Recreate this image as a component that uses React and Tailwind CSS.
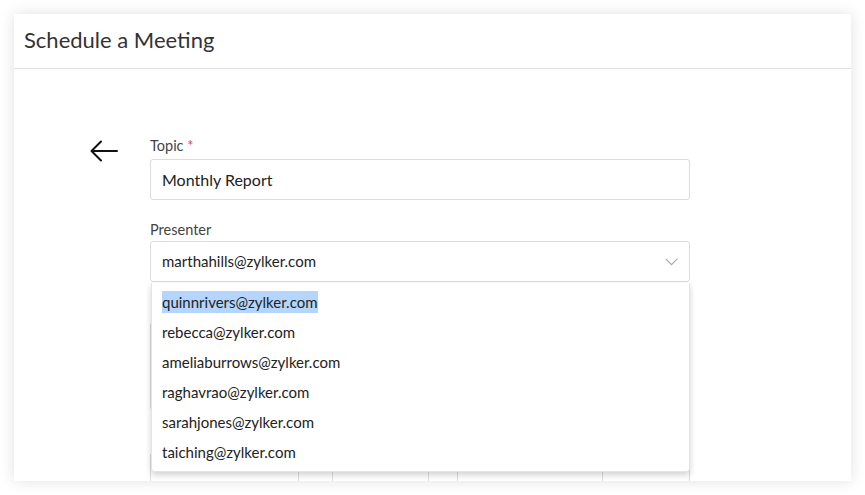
import React from 'react';

const presenters = [
  'quinnrivers@zylker.com',
  'rebecca@zylker.com',
  'ameliaburrows@zylker.com',
  'raghavrao@zylker.com',
  'sarahjones@zylker.com',
  'taiching@zylker.com',
];

const BackArrow = () => (
  <svg width="28" height="22" viewBox="0 0 28 22" fill="none" stroke="#111" strokeWidth="2" strokeLinecap="round" strokeLinejoin="round">
    <path d="M27 11H2" />
    <path d="M11 1.5L1.5 11L11 20.5" />
  </svg>
);

const Chevron = () => (
  <svg width="13" height="8" viewBox="0 0 13 8" fill="none" stroke="#a8a8a8" strokeWidth="1.2">
    <path d="M0.8 0.8L6.5 6.6L12.2 0.8" />
  </svg>
);

export default function App() {
  return (
    <div className="h-[495px] w-[865px] bg-white px-[14px] pt-[14px] font-['Lato','Open_Sans',sans-serif]">
      <div className="flex h-[467px] w-[837px] flex-col overflow-hidden bg-white shadow-[0_0_14px_rgba(0,0,0,0.12)]">
        <div className="flex h-[55px] shrink-0 items-center border-b border-[#e2e2e2] px-[10px] pb-[4px]">
          <h1 className="text-[22px] text-[#333]">Schedule a Meeting</h1>
        </div>

        <div className="flex pl-[76px] pt-[67px]">
          <div className="w-[60px] pt-[4px]">
            <BackArrow />
          </div>

          <div className="relative w-[540px]">
            <label className="block text-[14.5px] leading-[20px] text-[#444]">
              Topic <span className="text-[#e5484d]">*</span>
            </label>
            <div className="mt-[3px] flex h-[41px] items-center rounded-[3px] border border-[#dcdcdc] px-[11px] text-[16px] text-[#222]">
              Monthly Report
            </div>

            <label className="mt-[20px] block text-[14.5px] leading-[20px] text-[#444]">Presenter</label>
            <div className="relative mt-[1px]">
              <div className="flex h-[41px] items-center justify-between rounded-[3px] border border-[#dcdcdc] px-[11px] text-[15px] text-[#222]">
                <span>marthahills@zylker.com</span>
                <Chevron />
              </div>

              <div className="absolute left-[1px] right-0 top-[42px] z-10 rounded-b-[4px] border border-t-0 border-[#e4e4e4] bg-white py-[4px] shadow-[0_3px_6px_rgba(0,0,0,0.18)]">
                {presenters.map((p, i) => (
                  <div key={p} className="flex h-[30px] items-center px-[10px] text-[15px] text-[#222]">
                    <span className={i === 0 ? 'bg-[#b4d5fe]' : ''}>{p}</span>
                  </div>
                ))}
              </div>
            </div>

            <div className="mt-[40px] h-[88px] rounded-[3px] border border-[#dcdcdc]"></div>

            <div className="mt-[44px] flex h-[41px] border border-[#dcdcdc]">
              <div className="w-[148px] border-r border-[#dcdcdc]"></div>
              <div className="w-[34px] border-r border-[#dcdcdc]"></div>
              <div className="w-[96px] border-r border-[#dcdcdc]"></div>
              <div className="w-[29px] border-r border-[#dcdcdc]"></div>
              <div className="w-[145px] border-r border-[#dcdcdc]"></div>
              <div className="flex-1"></div>
            </div>
          </div>
        </div>
      </div>
    </div>
  );
}
